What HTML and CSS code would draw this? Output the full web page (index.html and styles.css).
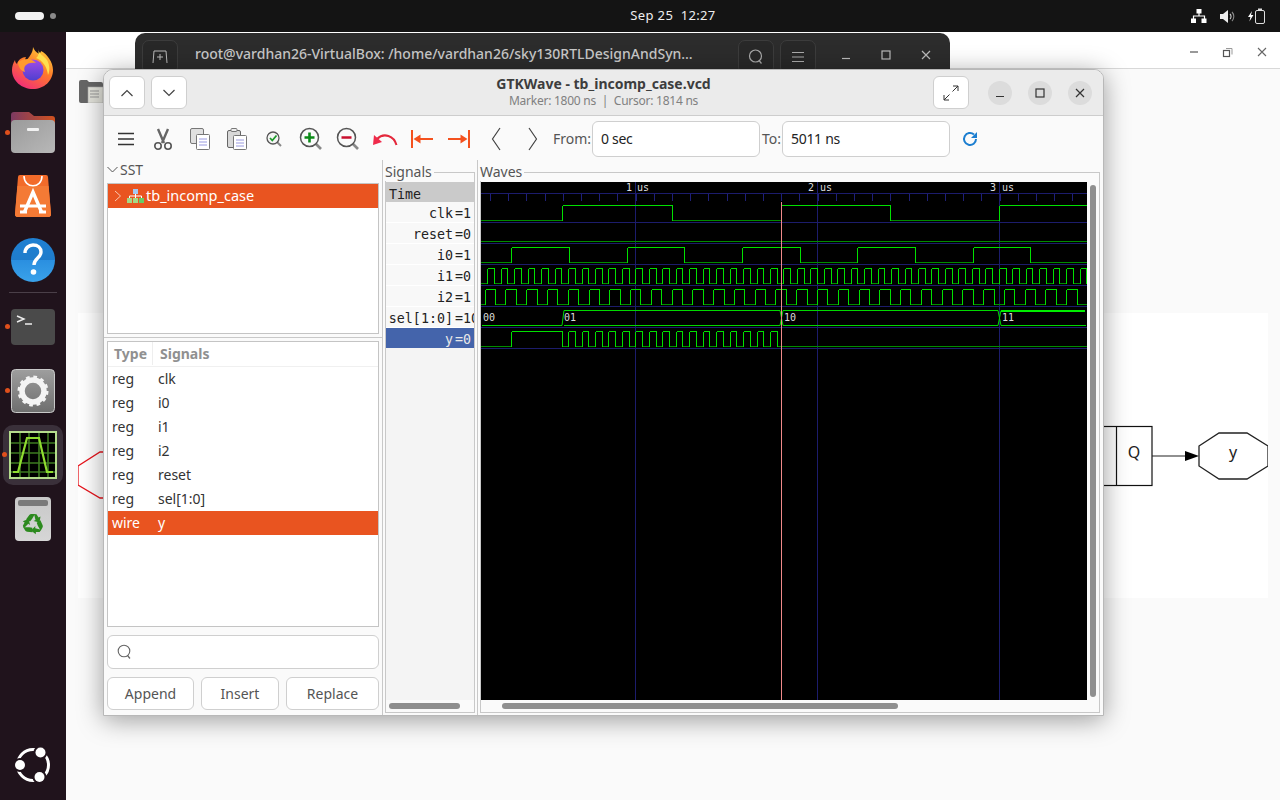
FILE: index.html
```html
<!DOCTYPE html>
<html lang="en">
<head>
<meta charset="utf-8">
<title>GTKWave - tb_incomp_case.vcd</title>
<link rel="stylesheet" href="styles.css">
</head>
<body>
<div class="desktop">
  <header class="topbar">
    <div class="activities"><span class="pill"></span><span class="wsdot"></span></div>
    <div class="clock">Sep 25&nbsp;&nbsp;12:27</div>
    <div class="tray">
      <svg width="16" height="15" viewBox="0 0 16 15"><rect x="5.5" y="0" width="5" height="4.5" fill="#fff"/><rect x="0" y="9.5" width="5" height="4.5" fill="#fff"/><rect x="10.5" y="9.5" width="5" height="4.5" fill="#fff"/><path d="M8 4v3M2.5 10V7h11v3" fill="none" stroke="#fff" stroke-width="1.2"/></svg>
      <svg width="15" height="15" viewBox="0 0 15 15"><path d="M0 5h3l5-4v13l-5-4H0z" fill="#eee"/><path d="M10 5a3.5 3.5 0 0 1 0 5" fill="none" stroke="#ccc" stroke-width="1.1"/><path d="M12 3a6.5 6.5 0 0 1 0 9" fill="none" stroke="#888" stroke-width="1.1"/></svg>
      <svg width="17" height="16" viewBox="0 0 17 16"><path d="M4 3L0 9h2.4L1.4 13.5 5.4 7H3z" fill="#fff"/><rect x="7.5" y="2.5" width="9" height="13" rx="1.5" fill="none" stroke="#ddd"/><rect x="10" y="0.5" width="4" height="2" fill="#ddd"/></svg>
    </div>
  </header>

  <nav class="dock">
    <div class="dock-item dock-firefox">
      <svg width="44" height="44" viewBox="0 0 44 44">
        <defs>
          <linearGradient id="ffa" x1="0.8" y1="0" x2="0.2" y2="1"><stop offset="0" stop-color="#ffd23a"/><stop offset=".45" stop-color="#ff7a2a"/><stop offset="1" stop-color="#f0277f"/></linearGradient>
          <linearGradient id="ffb" x1="0.5" y1="0" x2="0.5" y2="1"><stop offset="0" stop-color="#a24be8"/><stop offset="1" stop-color="#4f3fd0"/></linearGradient>
        </defs>
        <path d="M22 1c1 3 3 5 6 7 1-1 2-2 2-3 6 3 12 11 12 19 0 11-9 19-20 19S1 35 1 24c0-3 1-7 3-10 0 2 1 3 2 4 1-4 5-7 9-7-1 2-1 3 0 4 3-4 7-8 7-14z" fill="url(#ffa)"/>
        <path d="M27 3c1 5 6 7 9 11 3 5 3 11 1 15-1-9-6-15-12-17 3-2 3-6 2-9z" fill="#ffdf4f"/>
        <circle cx="22" cy="24" r="10.5" fill="url(#ffb)"/>
        <path d="M7 16c3-2 6-3 10-3 3 0 6 2 8 4-4-1-9 0-11 3-1 2-1 4 0 6-4-1-7-5-7-10z" fill="#ff9a2e"/>
      </svg>
    </div>
    <div class="dock-item dock-files">
      <span class="run-dot"></span>
      <svg width="44" height="41" viewBox="0 0 44 41">
        <defs>
          <linearGradient id="fb" x1="0" y1="0" x2="1" y2="0"><stop offset="0" stop-color="#7c3a62"/><stop offset="1" stop-color="#d2521f"/></linearGradient>
          <linearGradient id="ff" x1="0" y1="0" x2="1" y2="1"><stop offset="0" stop-color="#9a9a9a"/><stop offset="1" stop-color="#b8b8b8"/></linearGradient>
        </defs>
        <path d="M0 3a3 3 0 0 1 3-3h15l5 4h18a3 3 0 0 1 3 3v10H0z" fill="url(#fb)"/>
        <rect x="0" y="8" width="44" height="33" rx="4" fill="url(#ff)"/>
        <rect x="16" y="16" width="12" height="3" rx="1" fill="#f2f2f2"/>
      </svg>
    </div>
    <div class="dock-item dock-store">
      <svg width="36" height="42" viewBox="0 0 36 42">
        <path d="M3 2a2 2 0 0 1 2-2h26a2 2 0 0 1 2 2l3 37a2.500 2.500 0 0 1-2.500 3h-31A2.500 2.500 0 0 1 0 39z" fill="#f26b2a"/>
        <path d="M2.500 11H33.500L36 39a2.500 2.500 0 0 1-2.500 3h-31A2.500 2.500 0 0 1 0 39z" fill="#f47a35"/>
        <path d="M9 1c0 13 18 13 18 0" fill="none" stroke="#fff" stroke-width="1.600"/>
        <path d="M9.500 37L18 17l8.500 20" fill="none" stroke="#fff" stroke-width="3.400"/>
        <path d="M5 31h26M5 37h7M24 37h7" fill="none" stroke="#fff" stroke-width="2.800"/>
      </svg>
    </div>
    <div class="dock-item dock-help">
      <svg width="44" height="44" viewBox="0 0 44 44">
        <defs><linearGradient id="hg" x1="0" y1="0" x2="0" y2="1"><stop offset="0" stop-color="#1f80d2"/><stop offset=".5" stop-color="#1f7ccb"/><stop offset=".5" stop-color="#2a8fe0"/><stop offset="1" stop-color="#3aa2ea"/></linearGradient></defs>
        <circle cx="22" cy="22" r="22" fill="url(#hg)"/>
        <path d="M14 15c0-5 4-8 8-8 5 0 8 3 8 7 0 6-7 6-7 13" fill="none" stroke="#fff" stroke-width="3.400"/>
        <circle cx="22.500" cy="34" r="2.800" fill="#fff"/>
      </svg>
    </div>
    <div class="dock-sep"></div>
    <div class="dock-item dock-term">
      <span class="run-dot"></span>
      <svg width="44" height="36" viewBox="0 0 44 36"><rect width="44" height="36" rx="4" fill="#4a4a4a"/><path d="M6 7l7 3-7 3M14 15h7" fill="none" stroke="#eee" stroke-width="1.400"/></svg>
    </div>
    <div class="dock-item dock-settings">
      <span class="run-dot"></span>
      <svg width="44" height="44" viewBox="0 0 44 44">
        <defs><linearGradient id="sg" x1="0" y1="0" x2="0" y2="1"><stop offset="0" stop-color="#9e9e9e"/><stop offset="1" stop-color="#6e6e6e"/></linearGradient></defs>
        <rect x=".5" y=".5" width="43" height="43" rx="4" fill="url(#sg)" stroke="#c8c8c8"/>
        <circle cx="22" cy="22" r="11" fill="none" stroke="#f4f4f4" stroke-width="5.500"/>
        <circle cx="22" cy="22" r="13.500" fill="none" stroke="#f4f4f4" stroke-width="4" stroke-dasharray="3.530 3.530"/>
      </svg>
    </div>
    <div class="dock-item dock-gtk">
      <span class="run-dot"></span>
      <div class="gtk-tile">
        <svg width="48" height="48" viewBox="0 0 48 48">
          <rect x="1" y="1" width="46" height="46" fill="#000" stroke="#b4dc8c" stroke-width="2"/>
          <path d="M2 12h44M2 22h44M2 32h44M2 41h44M11 2v44M20 2v44M30 2v44M39 2v44" stroke="#3d7a20" stroke-width="1.600"/>
          <path d="M4 41h5l9-34h12l8 34h6" fill="none" stroke="#8fdc30" stroke-width="2.200"/>
        </svg>
      </div>
    </div>
    <div class="dock-item dock-trash">
      <svg width="36" height="44" viewBox="0 0 36 44">
        <defs><linearGradient id="tg" x1="0" y1="0" x2="0" y2="1"><stop offset="0" stop-color="#c8c8c8"/><stop offset="1" stop-color="#d6d6d6"/></linearGradient></defs>
        <rect width="36" height="44" rx="4" fill="url(#tg)"/>
        <rect x="3" y="3" width="30" height="6" rx="2" fill="#7a7a7a"/>
        <g fill="#2c8a1e">
          <g><path d="M11 22.500l3.300-4.500q.7-1 2-1h3.700l-3 5-2 2.500z"/><path d="M19 17l2.500.3 2 3.200 2-1-1 6-6-1.500 2-1z"/></g>
          <g transform="rotate(120 18 27)"><path d="M11 22.500l3.300-4.500q.7-1 2-1h3.700l-3 5-2 2.500z"/><path d="M19 17l2.500.3 2 3.200 2-1-1 6-6-1.500 2-1z"/></g>
          <g transform="rotate(240 18 27)"><path d="M11 22.500l3.300-4.500q.7-1 2-1h3.700l-3 5-2 2.500z"/><path d="M19 17l2.500.3 2 3.200 2-1-1 6-6-1.500 2-1z"/></g>
        </g>
      </svg>
    </div>
    <div class="dock-spacer"></div>
    <div class="dock-item dock-ubuntu">
      <svg width="38" height="38" viewBox="0 0 38 38">
        <circle cx="19" cy="19" r="15.500" fill="none" stroke="#fff" stroke-width="3"/>
        <circle cx="26.500" cy="6.500" r="7" fill="#20131c"/><circle cx="6" cy="19" r="7" fill="#20131c"/><circle cx="25.500" cy="31" r="7" fill="#20131c"/>
        <circle cx="26.500" cy="6.500" r="5" fill="#fff"/><circle cx="6" cy="19" r="5" fill="#fff"/><circle cx="25.500" cy="31" r="5" fill="#fff"/>
      </svg>
    </div>
  </nav>

  <main class="back-app">
    <div class="back-head">
      <svg width="12" height="4" viewBox="0 0 12 4"><path d="M2 2h8" stroke="#555" stroke-width="1.200"/></svg>
      <svg width="12" height="12" viewBox="0 0 12 12"><rect x="1.500" y="4.500" width="6" height="6" fill="none" stroke="#555" stroke-width="1.200"/><path d="M4 2.500h6v6" fill="none" stroke="#999"/></svg>
      <svg width="12" height="12" viewBox="0 0 12 12"><path d="M2 2l8 8M10 2l-8 8" stroke="#666" stroke-width="1.100"/></svg>
    </div>
    <div class="back-body">
      <svg class="folder-icon" width="25" height="24" viewBox="0 0 25 24">
        <path d="M0 3a2 2 0 0 1 2-2h6l2 2h12a2 2 0 0 1 2 2v17a2 2 0 0 1-2 2H2a2 2 0 0 1-2-2z" fill="#666"/>
        <rect x="9" y="8" width="15" height="16" fill="#e4e4dc" stroke="#aaa" stroke-width=".6"/>
        <path d="M11 12h9M11 15h9M11 18h9" stroke="#999"/>
      </svg>
      <div class="diagram">
        <svg width="1190" height="285" viewBox="78 313 1190 285">
          <path d="M108 452H100L78 466V485L100 498H108" fill="none" stroke="#e8141c" stroke-width="1.300"/>
          <rect x="1090" y="426.500" width="62" height="59" fill="#fff" stroke="#111" stroke-width="1.200"/>
          <path d="M1116.500 426v60" stroke="#111" stroke-width="1.200"/>
          <path d="M1152 456h34" stroke="#222" stroke-width="1.200"/>
          <path d="M1185 451l14 5-14 5z" fill="#000"/>
          <path d="M1199 446l20-13h28l21 13v20l-21 13h-28l-20-13z" fill="#fff" stroke="#222" stroke-width="1.300"/>
          <text class="dia-text" x="1134" y="458" text-anchor="middle">Q</text>
          <text class="dia-text" x="1233" y="458" text-anchor="middle">y</text>
        </svg>
      </div>
    </div>
  </main>

  <section class="terminal">
    <div class="term-left">
      <span class="term-btn">
        <svg width="16" height="16" viewBox="0 0 16 16"><path d="M1 14l1-12h12l1 12M8 5v6M5 8h6" fill="none" stroke="#bbb" stroke-width="1"/></svg>
      </span>
    </div>
    <div class="term-title">root@vardhan26-VirtualBox: /home/vardhan26/sky130RTLDesignAndSyn…</div>
    <div class="term-right">
      <span class="term-btn"><svg width="16" height="16" viewBox="0 0 16 16"><circle cx="7.500" cy="7" r="6" fill="none" stroke="#aaa" stroke-width="1.200"/><path d="M11 11.500l2.500 3" stroke="#aaa" stroke-width="1.200"/></svg></span>
      <span class="term-btn term-menu"><svg width="14" height="14" viewBox="0 0 14 14"><path d="M1 2.500h12M1 7h12M1 11.500h12" stroke="#aaa" stroke-width="1.100"/></svg></span>
      <span class="term-ctl"><svg width="10" height="10" viewBox="0 0 10 10"><path d="M1 8.500h8" stroke="#bbb" stroke-width="1.200"/></svg></span>
      <span class="term-ctl"><svg width="10" height="10" viewBox="0 0 10 10"><rect x="1" y="1" width="8" height="8" fill="none" stroke="#bbb" stroke-width="1.200"/></svg></span>
      <span class="term-ctl"><svg width="10" height="10" viewBox="0 0 10 10"><path d="M1 1l8 8M9 1l-8 8" stroke="#bbb" stroke-width="1.200"/></svg></span>
    </div>
  </section>

  <section class="gtk">
    <div class="titlebar">
      <div class="tb-left">
        <button class="tb-btn"><svg width="14" height="8" viewBox="0 0 14 8"><path d="M1.500 7L7 1.500 12.500 7" fill="none" stroke="#444" stroke-width="1.200"/></svg></button>
        <button class="tb-btn"><svg width="14" height="8" viewBox="0 0 14 8"><path d="M1.500 1L7 6.500 12.500 1" fill="none" stroke="#444" stroke-width="1.200"/></svg></button>
      </div>
      <div class="tb-title">
        <div class="tb-main">GTKWave - tb_incomp_case.vcd</div>
        <div class="tb-sub">Marker: 1800 ns&nbsp; |&nbsp; Cursor: 1814 ns</div>
      </div>
      <div class="tb-right">
        <button class="tb-btn tb-expand"><svg width="16" height="16" viewBox="0 0 16 16"><path d="M10 1h5v5M15 1L9.500 6.500M6 15H1v-5M1 15l5.500-5.500" fill="none" stroke="#333" stroke-width="1"/></svg></button>
        <span class="wc"><svg width="10" height="10" viewBox="0 0 10 10"><path d="M1 8.500h8" stroke="#333" stroke-width="1.200"/></svg></span>
        <span class="wc"><svg width="10" height="10" viewBox="0 0 10 10"><rect x="1" y="1" width="8" height="8" fill="none" stroke="#333" stroke-width="1.200"/></svg></span>
        <span class="wc"><svg width="10" height="10" viewBox="0 0 10 10"><path d="M1 1l8 8M9 1l-8 8" stroke="#333" stroke-width="1.200"/></svg></span>
      </div>
    </div>

    <div class="toolbar">
      <span class="tool"><svg width="18" height="14" viewBox="0 0 18 14"><path d="M1 1.500h16M1 7h16M1 12.500h16" stroke="#333" stroke-width="1.500"/></svg></span>
      <span class="tool"><svg width="20" height="22" viewBox="0 0 20 22"><path d="M5 1l6 14M15 1L9 15" stroke="#666" stroke-width="2.400"/><circle cx="5" cy="18" r="3.200" fill="none" stroke="#555" stroke-width="1.600"/><circle cx="15" cy="18" r="3.200" fill="none" stroke="#555" stroke-width="1.600"/></svg></span>
      <span class="tool"><svg width="20" height="22" viewBox="0 0 20 22"><rect x=".5" y=".5" width="13" height="15" rx="1.500" fill="#e0e0e0" stroke="#777"/><rect x="6.500" y="6.500" width="13" height="15" rx="1" fill="#fff" stroke="#777"/><path d="M9 11h8M9 14h8M9 17h8" stroke="#9a9ae0"/></svg></span>
      <span class="tool"><svg width="20" height="22" viewBox="0 0 20 22"><rect x=".5" y="2.500" width="13" height="17" rx="1.500" fill="#d8d8d8" stroke="#666"/><rect x="4" y=".5" width="6" height="3" rx="1" fill="#eee" stroke="#777"/><rect x="6.500" y="7.500" width="13" height="14" rx="1" fill="#fff" stroke="#777"/><path d="M9 12h8M9 15h8M9 18h8" stroke="#9a9ae0"/></svg></span>
      <span class="tool"><svg width="18" height="18" viewBox="0 0 18 18"><path d="M11.500 11.500l4.500 4.500" stroke="#888" stroke-width="2"/><circle cx="8" cy="8" r="6" fill="#f4f4f4" stroke="#555" stroke-width="1.300"/><path d="M5 8l2.300 2.500L11.500 5.500" fill="none" stroke="#1d9a2b" stroke-width="1.800"/></svg></span>
      <span class="tool"><svg width="24" height="24" viewBox="0 0 24 24"><path d="M16 16l6 6" stroke="#888" stroke-width="2.600"/><circle cx="10.500" cy="10.500" r="9" fill="#fafafa" stroke="#555" stroke-width="1.500"/><path d="M10.500 5.500v10M5.500 10.500h10" stroke="#0b8a17" stroke-width="2.600"/></svg></span>
      <span class="tool"><svg width="24" height="24" viewBox="0 0 24 24"><path d="M16 16l6 6" stroke="#888" stroke-width="2.600"/><circle cx="10.500" cy="10.500" r="9" fill="#fafafa" stroke="#555" stroke-width="1.500"/><path d="M5.500 10.500h10" stroke="#c8102e" stroke-width="2.600"/></svg></span>
      <span class="tool"><svg width="26" height="16" viewBox="0 0 26 16"><path d="M24.500 14C22 5 12 1 5 8" fill="none" stroke="#e4283c" stroke-width="2"/><path d="M1 14l1-10 8 7z" fill="#ef2b4b"/></svg></span>
      <span class="tool"><svg width="24" height="20" viewBox="0 0 24 20"><path d="M2 1v18" stroke="#f4511e" stroke-width="2"/><path d="M9 10h14" stroke="#f4511e" stroke-width="2"/><path d="M3.500 10l7-4.500v9z" fill="#f4511e"/></svg></span>
      <span class="tool"><svg width="24" height="20" viewBox="0 0 24 20"><path d="M22 1v18" stroke="#f4511e" stroke-width="2"/><path d="M1 10h14" stroke="#f4511e" stroke-width="2"/><path d="M20.500 10l-7-4.500v9z" fill="#f4511e"/></svg></span>
      <span class="tool"><svg width="10" height="24" viewBox="0 0 10 24"><path d="M9 1L1.500 12 9 23" fill="none" stroke="#444" stroke-width="1.200"/></svg></span>
      <span class="tool"><svg width="10" height="24" viewBox="0 0 10 24"><path d="M1 1L8.500 12 1 23" fill="none" stroke="#444" stroke-width="1.200"/></svg></span>
      <span class="tl-label tl-from">From:</span>
      <span class="tl-input">0 sec</span>
      <span class="tl-label tl-to">To:</span>
      <span class="tl-input">5011 ns</span>
      <span class="tool tool-refresh"><svg width="16" height="16" viewBox="0 0 16 16"><path d="M14 8a6 6 0 1 1-2-4.500" fill="none" stroke="#1c7ed0" stroke-width="2"/><path d="M15 1v6H9z" fill="#1c7ed0"/></svg></span>
    </div>

    <div class="panes">
      <div class="pane-left">
        <div class="sst-head">
          <svg width="11" height="7" viewBox="0 0 11 7"><path d="M.5 1l5 5 5-5" fill="none" stroke="#555" stroke-width="1"/></svg>
          <span>SST</span>
        </div>
        <div class="tree">
          <div class="tree-row">
            <svg width="8" height="12" viewBox="0 0 8 12"><path d="M1 1l5.500 5L1 11" fill="none" stroke="#f9c9b2" stroke-width="1"/></svg>
            <svg class="tree-icon" width="17" height="14" viewBox="0 0 17 14"><rect x="6" y="0" width="5" height="5" fill="#a7c8f0"/><rect x="0" y="9" width="5" height="5" fill="#a6d985"/><rect x="6" y="9" width="5" height="5" fill="#a6d985"/><rect x="12" y="9" width="5" height="5" fill="#66cc66"/><path d="M8.500 5v4M2.500 9V7h12v2" fill="none" stroke="#fff" stroke-width="1"/></svg>
            <span class="tree-label">tb_incomp_case</span>
          </div>
        </div>
        <div class="pane-divider"></div>
        <div class="siglist">
          <div class="sl-head"><span class="sl-type">Type</span><span class="sl-name">Signals</span></div>
          <div class="sl-row"><span class="sl-type">reg</span><span class="sl-name">clk</span></div>
          <div class="sl-row"><span class="sl-type">reg</span><span class="sl-name">i0</span></div>
          <div class="sl-row"><span class="sl-type">reg</span><span class="sl-name">i1</span></div>
          <div class="sl-row"><span class="sl-type">reg</span><span class="sl-name">i2</span></div>
          <div class="sl-row"><span class="sl-type">reg</span><span class="sl-name">reset</span></div>
          <div class="sl-row"><span class="sl-type">reg</span><span class="sl-name">sel[1:0]</span></div>
          <div class="sl-row sl-sel"><span class="sl-type">wire</span><span class="sl-name">y</span></div>
        </div>
        <div class="search">
          <svg width="16" height="17" viewBox="0 0 16 17"><circle cx="7" cy="7" r="5.800" fill="none" stroke="#666" stroke-width="1.100"/><path d="M10.500 11.500l2.500 3" stroke="#666" stroke-width="1.200"/></svg>
        </div>
        <div class="actions">
          <button class="act act-append">Append</button>
          <button class="act act-insert">Insert</button>
          <button class="act act-replace">Replace</button>
        </div>
      </div>

      <div class="pane-signals">
        <div class="frame sig-frame">
          <span class="frame-label">Signals</span>
          <div class="sig-list">
            <div class="sig-time">Time</div>
            <div class="sig"><span class="sig-name">clk</span><span class="sig-val">=1</span></div>
            <div class="sig"><span class="sig-name">reset</span><span class="sig-val">=0</span></div>
            <div class="sig"><span class="sig-name">i0</span><span class="sig-val">=1</span></div>
            <div class="sig"><span class="sig-name">i1</span><span class="sig-val">=0</span></div>
            <div class="sig"><span class="sig-name">i2</span><span class="sig-val">=1</span></div>
            <div class="sig"><span class="sig-name">sel[1:0]</span><span class="sig-val">=10</span></div>
            <div class="sig sig-sel"><span class="sig-name">y</span><span class="sig-val">=0</span></div>
          </div>
          <div class="hscroll hscroll-sig"><span class="thumb-sig"></span></div>
        </div>
      </div>

      <div class="pane-waves">
        <div class="frame wave-frame">
          <span class="frame-label">Waves</span>
          <div class="wave-main">
            <svg class="wave" width="606" height="518" viewBox="481 182 606 518">
              <g id="ticks"></g>
              <g stroke="#1c1c6c" fill="none" shape-rendering="crispEdges">
                <path d="M481 193.500H1087"/>
                <path d="M481 222.500H1087M481 243.500H1087M481 264.500H1087M481 285.500H1087M481 306.500H1087M481 327.500H1087M481 348.500H1087"/>
                <path d="M635.500 182V700M817.500 182V700M999.500 182V700"/>
              </g>
              <g id="signals" fill="none" shape-rendering="crispEdges"></g>
              <g fill="none">
                <path d="M482 325.500H562L564 310.500H780L783 325.500H998L1001 310.500" stroke="#00d800"/>
                <path d="M564 325.500H780L783 310.500H998L1001 325.500H1086" stroke="#00d800"/>
                <path d="M1001 311H1085" stroke="#00ee00" stroke-width="2" shape-rendering="crispEdges"/>
              </g>
              <path d="M781.500 202V700" stroke="#f08a8a" shape-rendering="crispEdges"/>
              <g class="wave-text">
                <text x="632" y="191" text-anchor="end">1</text><text x="637" y="191">us</text>
                <text x="814" y="191" text-anchor="end">2</text><text x="820" y="191">us</text>
                <text x="996" y="191" text-anchor="end">3</text><text x="1002" y="191">us</text>
                <text x="483" y="321">00</text><text x="564" y="321">01</text><text x="784" y="321">10</text><text x="1002" y="321">11</text>
              </g>
            </svg>
            <div class="vscroll"><span class="thumb-v"></span></div>
          </div>
          <div class="hscroll hscroll-wave"><span class="thumb-h"></span></div>
        </div>
      </div>
    </div>
  </section>
</div>
<script src="script.js"></script>
</body>
</html>
```
FILE: styles.css
```css
* { box-sizing: border-box; }
html, body { margin: 0; padding: 0; width: 1280px; height: 800px; overflow: hidden; }
body { font-family: "Noto Sans", "Liberation Sans", sans-serif; font-size: 14px; color: #333; }
svg { display: block; flex: none; }
button { font: inherit; color: inherit; }

.desktop { position: relative; width: 1280px; height: 800px; display: grid; grid-template-columns: 66px 1fr; grid-template-rows: 32px 1fr; background: #fafafa; }

/* top bar */
.topbar { grid-column: 1 / 3; display: grid; grid-template-columns: 1fr auto 1fr; align-items: center; background: #141414; color: #eee; padding: 0 15px; }
.activities { display: flex; align-items: center; gap: 6px; }
.pill { width: 29px; height: 8px; border-radius: 4px; background: #f2f2f2; }
.wsdot { width: 6px; height: 6px; border-radius: 50%; background: #8a8a8a; }
.clock { font-size: 13px; letter-spacing: .35px; margin-left: 66px; margin-top: -2px; }
.tray { display: flex; align-items: center; justify-content: flex-end; gap: 13px; }

/* dock */
.dock { background: #20131c; display: flex; flex-direction: column; align-items: center; padding-top: 14px; }
.dock-item { position: relative; display: flex; justify-content: center; }
.run-dot { position: absolute; left: -6px; top: 50%; width: 5px; height: 5px; margin-top: -3px; border-radius: 50%; background: #e0501c; }
.dock-files { margin-top: 22px; }
.dock-store { margin-top: 22px; }
.dock-help { margin-top: 21px; }
.dock-sep { width: 48px; height: 1px; background: #4a3f48; margin-top: 10px; flex: none; }
.dock-term { margin-top: 16px; }
.dock-settings { margin-top: 24px; }
.dock-gtk { margin-top: 12px; }
.dock-gtk .run-dot { left: -1px; }
.gtk-tile { width: 60px; height: 60px; padding: 6px; border-radius: 10px; background: #3a303a; }
.dock-trash { margin-top: 12px; }
.dock-spacer { flex: 1; }
.dock-ubuntu { margin-bottom: 16px; }

/* window behind */
.back-app { display: flex; flex-direction: column; min-width: 0; background: #fafafa; }
.back-head { height: 37px; flex: none; background: #fff; border-bottom: 1px solid #d8d8d8; display: flex; align-items: center; justify-content: flex-end; gap: 22px; padding: 4px 12px 0 0; }
.back-body { position: relative; flex: 1; padding: 244px 0 0 12px; }
.folder-icon { position: absolute; left: 13px; top: 10px; }
.diagram { width: 1190px; height: 285px; background: #fff; }
.dia-text { font-size: 16px; fill: #222; }

/* terminal */
.terminal { position: absolute; left: 135px; top: 33px; width: 815px; height: 60px; background: #2c2c2c; border-radius: 10px 10px 0 0; display: flex; align-items: flex-start; padding-top: 7px; color: #c8c8c8; }
.term-left { width: 60px; padding-left: 7px; }
.term-btn { width: 36px; height: 34px; border: 1px solid #3c3c3c; border-radius: 7px; background: #282828; display: flex; align-items: center; justify-content: center; flex: none; }
.term-title { flex: 1; font-size: 14px; font-weight: 500; white-space: nowrap; margin-top: 4px; }
.term-right { display: flex; gap: 6px; margin-right: 7px; }
.term-menu { margin-right: 7px; }
.term-ctl { width: 34px; height: 30px; display: flex; align-items: center; justify-content: center; }

/* gtkwave window */
.gtk { position: absolute; left: 103px; top: 69px; width: 1001px; height: 647px; border-radius: 10px 10px 0 0; background: #fafafa; border: 1px solid #b8b8b8; box-shadow: 0 4px 26px rgba(0,0,0,.38); display: flex; flex-direction: column; overflow: hidden; }
.titlebar { height: 46px; flex: none; display: grid; grid-template-columns: 1fr auto 1fr; align-items: center; background: #ebebeb; border-bottom: 1px solid #cdcdcd; }
.tb-left { display: flex; gap: 6px; padding-left: 5px; }
.tb-btn { width: 36px; height: 33px; border: 1px solid #cfcfcf; border-radius: 6px; background: #fff; padding: 0; display: flex; align-items: center; justify-content: center; }
.tb-title { text-align: center; line-height: 1.2; }
.tb-main { font-weight: 700; font-size: 14px; color: #3d3d3d; }
.tb-sub { font-size: 12px; color: #808080; letter-spacing: -.25px; margin-top: 1px; }
.tb-right { display: flex; align-items: center; justify-content: flex-end; gap: 16px; padding-right: 11px; }
.wc { width: 24px; height: 24px; border-radius: 50%; background: #dcdcdc; display: flex; align-items: center; justify-content: center; }
.tb-expand { margin-right: 3px; }

.toolbar { height: 44px; flex: none; display: flex; align-items: center; padding: 2px 0 0 3px; }
.tool { width: 37px; height: 37px; display: flex; align-items: center; justify-content: center; flex: none; }
.tl-label { font-size: 14px; color: #555; padding-bottom: 2px; }
.tl-from { margin-left: 2px; width: 39px; }
.tl-to { margin-left: 2px; width: 20px; }
.tl-input { width: 168px; height: 36px; border: 1px solid #cfcfcf; border-radius: 6px; background: #fff; display: flex; align-items: center; padding: 0 0 2px 8px; font-size: 14px; color: #222; letter-spacing: -.3px; }
.tool-refresh { margin-left: 1px; }

.panes { flex: 1; min-height: 0; display: grid; grid-template-columns: 279px 95px 1fr; }
.pane-left { display: flex; flex-direction: column; padding: 0 3px 5px 3px; border-right: 1px solid #c8c8c8; position: relative; }
.sst-head { height: 23px; flex: none; display: flex; align-items: center; gap: 2px; padding-bottom: 4px; font-size: 14px; color: #555; }
.tree { height: 151px; flex: none; border: 1px solid #c4c4c4; background: #fff; }
.tree-row { height: 24px; background: #e95420; color: #fff; display: flex; align-items: center; padding-left: 6px; font-size: 14.500px; }
.tree-label { padding-bottom: 2px; }
.tree-icon { margin: 0 2px 0 5px; }
.pane-divider { height: 1px; flex: none; background: #c8c8c8; margin: 3px -3px 3px -3px; }
.siglist { height: 286px; flex: none; border: 1px solid #c4c4c4; background: #fff; }
.sl-head { height: 25px; display: flex; align-items: center; font-weight: 700; font-size: 14px; color: #909090; border-bottom: 1px solid #f0f0f0; padding-bottom: 1px; }
.sl-head .sl-type { border-right: 1px solid #eee; height: 100%; display: flex; align-items: center; padding-left: 6px; width: 45px; }
.sl-head .sl-name { padding-left: 7px; }
.sl-row { height: 24px; display: flex; align-items: center; padding-bottom: 2px; color: #333; font-size: 14px; }
.sl-type { width: 50px; padding-left: 4px; }
.sl-sel { background: #e95420; color: #fff; }
.search { height: 34px; flex: none; margin-top: 8px; border: 1px solid #cfcfcf; border-radius: 6px; background: #fff; display: flex; align-items: center; padding-left: 9px; }
.actions { display: flex; gap: 7px; margin-top: 8px; }
.act { height: 33px; border: 1px solid #cfcfcf; border-radius: 6px; background: #fff; padding: 0; font-size: 14px; color: #555; }
.act-append { width: 87px; }
.act-insert { width: 78px; }
.act-replace { width: 93px; }

.pane-signals { padding: 12px 2px 2px 2px; border-right: 1px solid #c8c8c8; }
.pane-waves { padding: 12px 3px 2px 2px; }
.frame { position: relative; height: 100%; border: 1px solid #c8c8c8; display: flex; flex-direction: column; }
.frame-label { position: absolute; left: -1px; top: -10px; background: #fafafa; padding: 0 2px 0 0; font-size: 14px; line-height: 18px; color: #555; }
.sig-frame { background: #fafafa; }
.sig-list { flex: 1; margin-top: 9px; background: #f4f4f4; font-family: "DejaVu Sans Mono", "Liberation Mono", monospace; font-size: 13.330px; color: #222; overflow: hidden; }
.sig-time { height: 20px; background: #cacaca; padding-left: 3px; line-height: 26px; }
.sig { height: 21px; display: flex; align-items: center; padding-top: 2px; background: #f8f8f8; border-bottom: 1px solid #fff; overflow: hidden; }
.sig-name { flex: 1; text-align: right; white-space: nowrap; padding-right: 2px; }
.sig-val { width: 19px; flex: none; white-space: nowrap; overflow: hidden; }
.sig-sel { background: #4464ab; color: #e8e8e8; height: 20px; border: 0; }
.hscroll { height: 12px; flex: none; display: flex; align-items: center; }
.thumb-sig { width: 71px; height: 6px; margin-left: 3px; border-radius: 3px; background: #8f8f8f; }
.wave-frame { background: #fafafa; }
.wave-main { flex: 1; min-height: 0; display: flex; margin-top: 9px; }
.wave { background: #000; }
.wave-text { font-family: "DejaVu Sans Mono", monospace; font-size: 10px; fill: #ddd; }
.vscroll { flex: 1; padding: 3px 0 3px 3px; }
.thumb-v { display: block; width: 6px; height: 512px; border-radius: 3px; background: #8f8f8f; }
.thumb-h { width: 396px; height: 6px; margin-left: 21px; border-radius: 3px; background: #8f8f8f; }
```
FILE: script.js
```js
// Builds the tick marks and the level traces of the waveform from edge lists.
var NS = "http://www.w3.org/2000/svg";
var L = 481, R = 1087;

function addPath(parent, d, stroke) {
  var p = document.createElementNS(NS, "path");
  p.setAttribute("d", d);
  p.setAttribute("stroke", stroke);
  parent.appendChild(p);
}

function periodic(first, period, end) {
  var out = [];
  for (var k = 0; ; k++) {
    var r = first + period * k, f = r + period / 2;
    if (r >= end) break;
    out.push(Math.round(r));
    if (f < end) out.push(Math.round(f));
  }
  return out;
}

var i1 = periodic(487.3, 13.46, R);
var i2 = periodic(484.7, 20.77, R);
var y = [511, 562].concat(i1.filter(function (x) { return x > 562 && x < 778; }));

var traces = [
  { hi: 205, edges: [562, 672, 781, 890, 999] },
  { hi: 226, edges: [] },
  { hi: 247, edges: [511, 569, 627, 684, 742, 800, 857, 915, 973, 1030] },
  { hi: 268, edges: i1 },
  { hi: 289, edges: i2 },
  { hi: 331, edges: y }
];

var g = document.getElementById("signals");
traces.forEach(function (t) {
  var hi = t.hi + 0.5, lo = t.hi + 15.5, bright = "", dim = "", x = L, high = false;
  t.edges.concat([R]).forEach(function (e, n, all) {
    var xe = e + 0.5;
    if (high) bright += "M" + x + " " + hi + "H" + xe;
    else dim += "M" + x + " " + lo + "H" + xe;
    if (n < all.length - 1) bright += "M" + xe + " " + hi + "V" + lo;
    x = xe;
    high = !high;
  });
  addPath(g, dim, "#008c00");
  if (bright) addPath(g, bright, "#00e000");
});

var ticks = document.getElementById("ticks"), d = "";
for (var n = -1; n < 34; n++) {
  var tx = Math.round(490 + 18.2 * n) + 0.5;
  if (tx > L && tx < R) d += "M" + tx + " 193V201";
}
ticks.setAttribute("shape-rendering", "crispEdges");
addPath(ticks, d, "#1f1f78");
```
